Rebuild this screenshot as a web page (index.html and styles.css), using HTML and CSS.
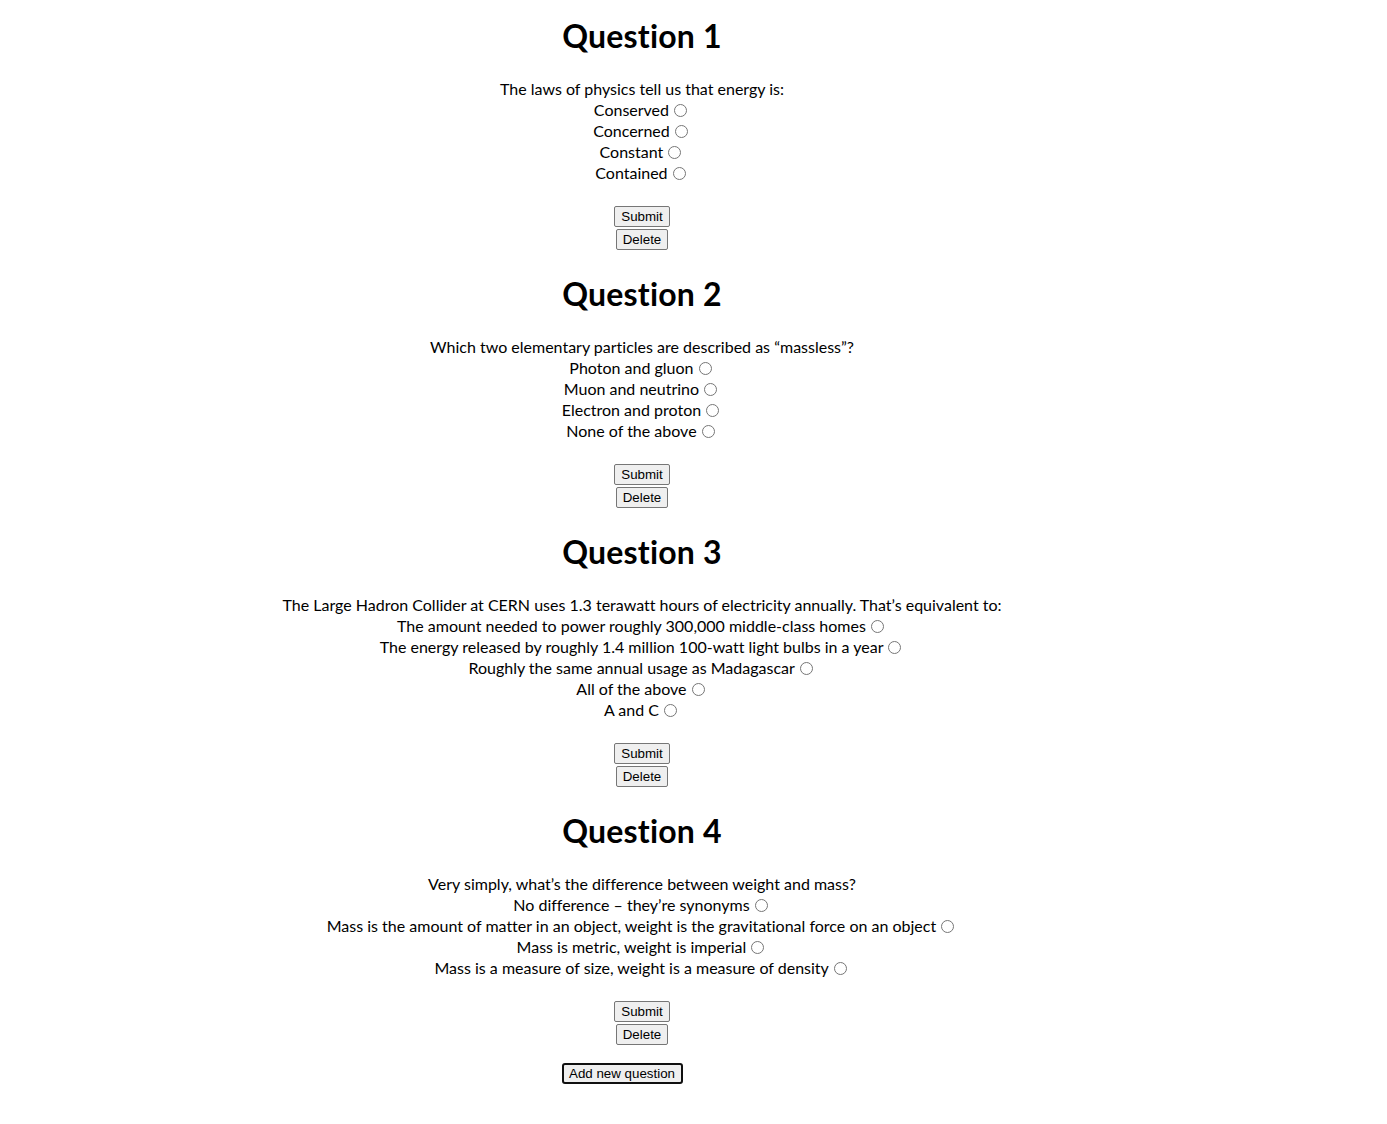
FILE: index.html
```html
<!DOCTYPE html>
<html>
<head>
<meta charset="utf-8">
<link rel="stylesheet" href="styles.css">
</head>
<body>
<div class="quiz">
  <section class="question">
    <h1 class="q-title">Question 1</h1>
    <div class="q-body">
      <div class="q-text">The laws of physics tell us that energy is:</div>
      <div class="opt">Conserved <input type="radio" name="q1"></div>
      <div class="opt">Concerned <input type="radio" name="q1"></div>
      <div class="opt">Constant <input type="radio" name="q1"></div>
      <div class="opt">Contained <input type="radio" name="q1"></div>
    </div>
    <div class="actions">
      <button class="btn">Submit</button>
      <button class="btn">Delete</button>
    </div>
  </section>
  <section class="question">
    <h1 class="q-title">Question 2</h1>
    <div class="q-body">
      <div class="q-text">Which two elementary particles are described as “massless”?</div>
      <div class="opt">Photon and gluon <input type="radio" name="q2"></div>
      <div class="opt">Muon and neutrino <input type="radio" name="q2"></div>
      <div class="opt">Electron and proton <input type="radio" name="q2"></div>
      <div class="opt">None of the above <input type="radio" name="q2"></div>
    </div>
    <div class="actions">
      <button class="btn">Submit</button>
      <button class="btn">Delete</button>
    </div>
  </section>
  <section class="question">
    <h1 class="q-title">Question 3</h1>
    <div class="q-body">
      <div class="q-text">The Large Hadron Collider at CERN uses 1.3 terawatt hours of electricity annually. That’s equivalent to:</div>
      <div class="opt">The amount needed to power roughly 300,000 middle-class homes <input type="radio" name="q3"></div>
      <div class="opt">The energy released by roughly 1.4 million 100-watt light bulbs in a year <input type="radio" name="q3"></div>
      <div class="opt">Roughly the same annual usage as Madagascar <input type="radio" name="q3"></div>
      <div class="opt">All of the above <input type="radio" name="q3"></div>
      <div class="opt">A and C <input type="radio" name="q3"></div>
    </div>
    <div class="actions">
      <button class="btn">Submit</button>
      <button class="btn">Delete</button>
    </div>
  </section>
  <section class="question">
    <h1 class="q-title">Question 4</h1>
    <div class="q-body">
      <div class="q-text">Very simply, what’s the difference between weight and mass?</div>
      <div class="opt">No difference – they’re synonyms <input type="radio" name="q4"></div>
      <div class="opt">Mass is the amount of matter in an object, weight is the gravitational force on an object <input type="radio" name="q4"></div>
      <div class="opt">Mass is metric, weight is imperial <input type="radio" name="q4"></div>
      <div class="opt">Mass is a measure of size, weight is a measure of density <input type="radio" name="q4"></div>
    </div>
    <div class="actions">
      <button class="btn">Submit</button>
      <button class="btn">Delete</button>
    </div>
  </section>
</div>
<div class="add-row">
  <button class="btn btn-add">Add new question</button>
</div>
</body>
</html>
```
FILE: styles.css
```css
html, body {
  margin: 0;
  padding: 0;
  background: #fff;
}
body {
  font-family: Lato, "Open Sans", sans-serif;
  font-size: 16px;
  color: #000;
  font-variant-ligatures: none;
}
.quiz {
  width: 1284px;
  text-align: center;
  padding-top: 15px;
}
.question {
  display: flex;
  flex-direction: column;
  align-items: center;
  margin-bottom: 23px;
}
.question:last-child {
  margin-bottom: 0;
}
.q-title {
  margin: 0 0 21px;
  font-size: 32px;
  font-weight: 700;
  line-height: 42px;
  height: 42px;
  letter-spacing: 0.2px;
}
.q-body {
  line-height: 21px;
}
.opt {
  height: 21px;
}
.opt input {
  width: 13px;
  height: 13px;
  margin: 3px 3px 0 1px;
  vertical-align: -1px;
}
.actions {
  margin-top: 23px;
  display: flex;
  flex-direction: column;
  align-items: center;
  gap: 2px;
}
.btn {
  font-family: "Liberation Sans", Arial, sans-serif;
  font-size: 13.333px;
  line-height: 17px;
  height: 21px;
  padding: 0 6px;
  background: #efefef;
  color: #000;
  border: 1px solid #767676;
  border-radius: 2px;
}
.add-row {
  padding-left: 562px;
  padding-top: 17px;
}
.btn-add {
  border: 2px solid #101010;
  border-radius: 3px;
  height: 21px;
  padding: 0 6px 0 5px;
}
```
